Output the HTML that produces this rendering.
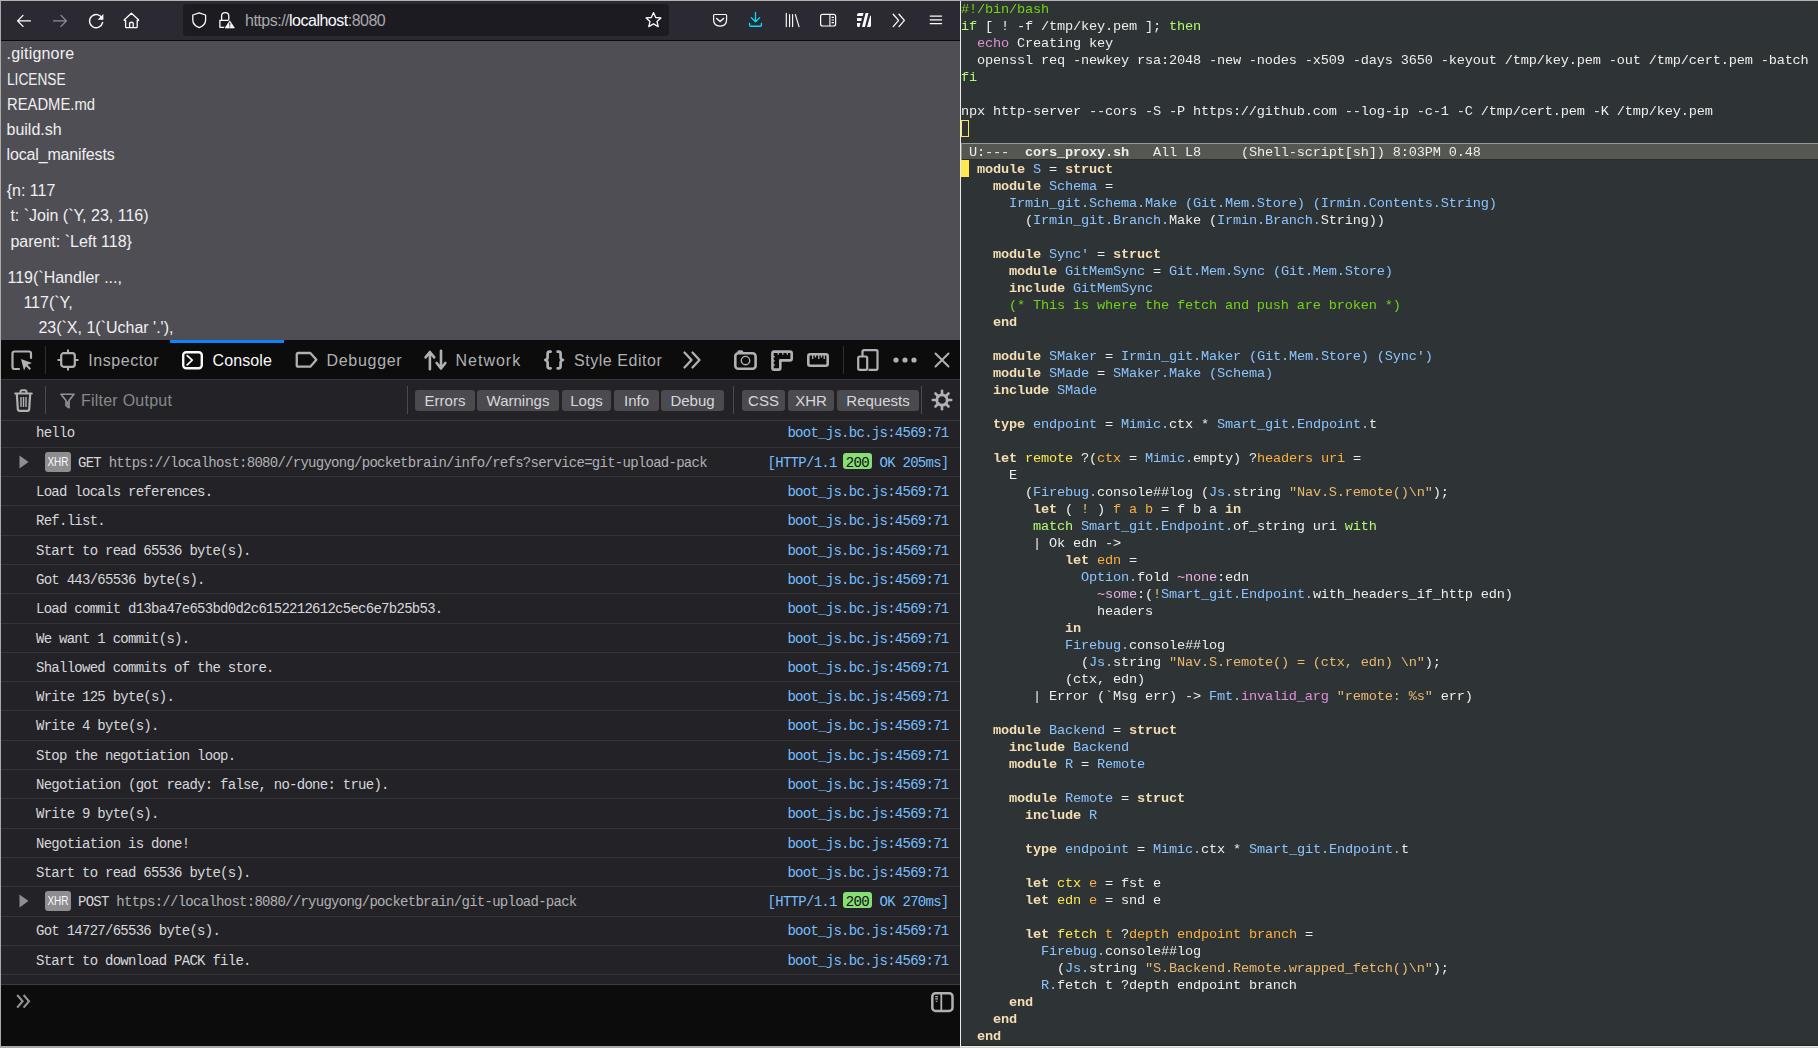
<!DOCTYPE html>
<html><head><meta charset="utf-8"><title>screen</title><style>*{margin:0;padding:0;box-sizing:border-box}
html,body{width:1818px;height:1048px;overflow:hidden;background:#2e3436;position:relative}
.a{position:absolute}
.t{white-space:pre}
svg{overflow:visible}
</style></head><body>
<div class="a" style="left:0px;top:0px;width:1818px;height:1px;background:#b5b3ae;"></div>
<div class="a" style="left:0px;top:0px;width:1px;height:1048px;background:#a9aaa5;"></div>
<div class="a" style="left:1px;top:1px;width:959px;height:39px;background:#2b2a33;"></div>
<div class="a" style="left:1px;top:40px;width:959px;height:1px;background:#0b0b0e;"></div>
<div class="a" style="left:183px;top:4.4px;width:486px;height:31.3px;background:#1c1b22;border-radius:4px"></div>
<svg class="a" style="left:0px;top:0px;" width="960" height="41" viewBox="0 0 960 41"><path d="M17.6 20.9 H30.4 M23 15.4 L17.6 20.9 L23 26.4" fill="none" stroke="#fbfbfe" stroke-width="1.35" stroke-linecap="round" stroke-linejoin="round"/><path d="M66.4 20.9 H53.6 M61 15.4 L66.4 20.9 L61 26.4" fill="none" stroke="#8f8e95" stroke-width="1.35" stroke-linecap="round" stroke-linejoin="round"/><path d="M102.2 18.5 A6.6 6.6 0 1 0 102.6 22.5" fill="none" stroke="#fbfbfe" stroke-width="1.4" stroke-linecap="round"/><path d="M103.4 14 V19.8 H97.6 Z" fill="#fbfbfe"/><path d="M131.4 13.3 L124.3 19.8 Q124 20.3 124.6 20.5 H125.6 V27 Q125.6 27.6 126.2 27.6 H136.6 Q137.2 27.6 137.2 27 V20.5 H138.2 Q138.8 20.3 138.5 19.8 Z" fill="none" stroke="#fbfbfe" stroke-width="1.3" stroke-linejoin="round"/><path d="M129.6 27.6 V23 Q131.4 21.4 133.2 23 V27.6" fill="none" stroke="#fbfbfe" stroke-width="1.3"/><path d="M199.2 12.8 L205.6 15 V20 Q205.6 25.2 199.2 27.6 Q192.8 25.2 192.8 20 V15 Z" fill="none" stroke="#fbfbfe" stroke-width="1.3" stroke-linejoin="round"/><path d="M221.6 20 V16.2 Q221.6 12.7 225.2 12.7 Q228.8 12.7 228.8 16.2 V20" fill="none" stroke="#fbfbfe" stroke-width="1.3"/><path d="M225.5 27.3 H219.9 V20.4 H229.6" fill="none" stroke="#fbfbfe" stroke-width="1.3" stroke-linejoin="round"/><path d="M229.8 20.2 L235 28.3 H224.6 Z" fill="#1c1b22" stroke="#1c1b22" stroke-width="1.6" stroke-linejoin="round"/><path d="M229.8 20.8 L234.5 28 H225.1 Z" fill="#fbfbfe" stroke="#fbfbfe" stroke-width="0.6" stroke-linejoin="round"/><rect x="229.3" y="22.6" width="1" height="3" fill="#1c1b22"/><rect x="229.3" y="26.3" width="1" height="1" fill="#1c1b22"/><path d="M653.5 12.6 L655.7 17.5 L660.9 17.9 L657 21.4 L658.2 26.6 L653.5 23.9 L648.8 26.6 L650 21.4 L646.1 17.9 L651.3 17.5 Z" fill="none" stroke="#fbfbfe" stroke-width="1.3" stroke-linejoin="round"/><path d="M714.6 14.5 H725.6 Q726.6 14.5 726.6 15.5 V19.6 Q726.6 26.1 720.1 26.1 Q713.6 26.1 713.6 19.6 V15.5 Q713.6 14.5 714.6 14.5 Z" fill="none" stroke="#fbfbfe" stroke-width="1.2"/><path d="M716.6 18.4 L720.1 21.6 L723.6 18.4" fill="none" stroke="#fbfbfe" stroke-width="1.4" stroke-linecap="round" stroke-linejoin="round"/><path d="M755.5 12.4 V21.6 M751.3 17.6 L755.5 21.8 L759.7 17.6" fill="none" stroke="#00ddff" stroke-width="1.3" stroke-linecap="round" stroke-linejoin="round"/><path d="M749.6 23.4 V25 Q749.6 26.2 750.8 26.2 H760.2 Q761.4 26.2 761.4 25 V23.4" fill="none" stroke="#00ddff" stroke-width="1.4" stroke-linecap="round"/><path d="M786.3 13.4 V26.6 M789.6 14.6 V26.6 M792.6 14.6 V26.6 M795.4 14.6 L799 26.6" fill="none" stroke="#fbfbfe" stroke-width="1.15" stroke-linecap="round"/><rect x="820.6" y="14.4" width="15" height="11.6" rx="2" fill="none" stroke="#fbfbfe" stroke-width="1.2"/><path d="M829.9 14.4 V26 M831.6 17.4 H834 M831.6 20 H834 M831.6 22.6 H834" fill="none" stroke="#fbfbfe" stroke-width="1.1"/><path d="M857 14.9 Q857 12.9 859 12.9 H863.5 L862.8 16 H857 Z M857 18 H861.9 L861.2 20.9 H857 Z M857 23.1 H860.5 L859.5 27 H858.5 Q857 27 857 25.5 Z M865.6 12.9 H868.5 L864.9 27 H862 Z M870.2 15.8 H871 V25.5 Q871 27 869.5 27 H867 Z" fill="#fbfbfe"/><path d="M893.2 14.2 L898.6 20.4 L893.2 26.6 M899 14.2 L904.4 20.4 L899 26.6" fill="none" stroke="#fbfbfe" stroke-width="1.3" stroke-linecap="round" stroke-linejoin="round"/><path d="M930.2 16 H941.6 M930.2 19.8 H941.6 M930.2 23.6 H941.6" fill="none" stroke="#fbfbfe" stroke-width="1.25" stroke-linecap="round"/></svg>
<div class="a t" style="left:245px;top:13.46px;font-size:16px;line-height:16px;font-family:'Liberation Sans', sans-serif;color:#a8a7ad;letter-spacing:-0.5px">https://<span style="color:#fbfbfe">localhost</span>:8080</div>
<div class="a" style="left:1px;top:41px;width:959px;height:299px;background:#4f4e55;"></div>
<div class="a t" style="left:6.50px;top:45.66px;font-size:16.000px;line-height:16.000px;font-family:'Liberation Sans', sans-serif;color:#f0f0f0;letter-spacing:0.2000px;">.gitignore</div>
<div class="a t" style="left:6.50px;top:71.66px;font-size:16.000px;line-height:16.000px;font-family:'Liberation Sans', sans-serif;color:#f0f0f0;transform:scaleX(0.855);transform-origin:0 0;letter-spacing:0.0000px;">LICENSE</div>
<div class="a t" style="left:6.50px;top:96.66px;font-size:16.000px;line-height:16.000px;font-family:'Liberation Sans', sans-serif;color:#f0f0f0;transform:scaleX(0.925);transform-origin:0 0;letter-spacing:0.0000px;">README.md</div>
<div class="a t" style="left:6.50px;top:121.66px;font-size:16.000px;line-height:16.000px;font-family:'Liberation Sans', sans-serif;color:#f0f0f0;letter-spacing:0.0000px;">build.sh</div>
<div class="a t" style="left:6.50px;top:147.26px;font-size:16.000px;line-height:16.000px;font-family:'Liberation Sans', sans-serif;color:#f0f0f0;letter-spacing:-0.1500px;">local_manifests</div>
<div class="a t" style="left:6.70px;top:182.96px;font-size:16.000px;line-height:16.000px;font-family:'Liberation Sans', sans-serif;color:#f0f0f0;">{n: 117</div>
<div class="a t" style="left:10.40px;top:208.46px;font-size:16.000px;line-height:16.000px;font-family:'Liberation Sans', sans-serif;color:#f0f0f0;">t: `Join (`Y, 23, 116)</div>
<div class="a t" style="left:10.40px;top:233.86px;font-size:16.000px;line-height:16.000px;font-family:'Liberation Sans', sans-serif;color:#f0f0f0;">parent: `Left 118}</div>
<div class="a t" style="left:7.50px;top:270.26px;font-size:16.000px;line-height:16.000px;font-family:'Liberation Sans', sans-serif;color:#f0f0f0;">119(`Handler ...,</div>
<div class="a t" style="left:23.40px;top:295.26px;font-size:16.000px;line-height:16.000px;font-family:'Liberation Sans', sans-serif;color:#f0f0f0;">117(`Y,</div>
<div class="a t" style="left:38.40px;top:319.76px;font-size:16.000px;line-height:16.000px;font-family:'Liberation Sans', sans-serif;color:#f0f0f0;">23(`X, 1(`Uchar '.'),</div>
<div class="a" style="left:1px;top:340px;width:959px;height:39px;background:#0c0c0d;"></div>
<div class="a" style="left:1px;top:379px;width:959px;height:1px;background:#38383d;"></div>
<div class="a" style="left:170px;top:340px;width:114px;height:3px;background:#0a84ff;"></div>
<svg class="a" style="left:11px;top:350px;" width="23" height="21" viewBox="0 0 23 21"><path d="M8 19 H3.5 Q1.5 19 1.5 17 V3.5 Q1.5 1.5 3.5 1.5 H18 Q20 1.5 20 3.5 V8" fill="none" stroke="#b1b1b3" stroke-width="2.2" stroke-linecap="round"/><path d="M10 9 L21 13 L16.5 14.8 L20 18.5 L18.5 20 L15 16.3 L13 20.5 Z" fill="#b1b1b3"/></svg>
<div class="a" style="left:45px;top:346px;width:1px;height:28px;background:#2f2f33;"></div>
<svg class="a" style="left:57px;top:349px;" width="22" height="22" viewBox="0 0 22 22"><rect x="4.2" y="4.2" width="13.6" height="13.6" rx="2.5" fill="none" stroke="#b1b1b3" stroke-width="2.2"/><path d="M11 0.5 V4.2 M11 17.8 V21.5 M0.5 11 H4.2 M17.8 11 H21.5" stroke="#b1b1b3" stroke-width="2"/></svg>
<div class="a t" style="left:88.30px;top:353.46px;font-size:16.000px;line-height:16.000px;font-family:'Liberation Sans', sans-serif;color:#b1b1b3;letter-spacing:0.5500px;">Inspector</div>
<svg class="a" style="left:181px;top:350px;" width="23" height="20" viewBox="0 0 23 20"><rect x="2.2" y="2.2" width="18.6" height="16" rx="3" fill="none" stroke="#f9f9fa" stroke-width="2.4"/><path d="M6.2 5.6 L11.2 10.2 L6.2 14.8" fill="none" stroke="#f9f9fa" stroke-width="1.8" stroke-linecap="round" stroke-linejoin="round"/></svg>
<div class="a t" style="left:212.50px;top:353.46px;font-size:16.000px;line-height:16.000px;font-family:'Liberation Sans', sans-serif;color:#f9f9fa;letter-spacing:0.1000px;">Console</div>
<svg class="a" style="left:295px;top:350px;" width="23" height="20" viewBox="0 0 23 20"><path d="M3.2 3 H15.3 L21.4 9.85 L15.3 16.7 H3.2 Q1.75 16.7 1.75 15.2 V4.5 Q1.75 3 3.2 3 Z" fill="none" stroke="#b1b1b3" stroke-width="2.3" stroke-linejoin="round"/></svg>
<div class="a t" style="left:326.50px;top:353.46px;font-size:16.000px;line-height:16.000px;font-family:'Liberation Sans', sans-serif;color:#b1b1b3;letter-spacing:0.7000px;">Debugger</div>
<svg class="a" style="left:424px;top:349px;" width="23" height="22" viewBox="0 0 23 22"><path d="M5.9 3.5 V20.2 M17 1.8 V18.5 M1.6 8.4 L5.9 3 L10.2 8.4 M12.7 14 L17 19.5 L21.3 14" fill="none" stroke="#b1b1b3" stroke-width="2.6" stroke-linecap="round" stroke-linejoin="round"/></svg>
<div class="a t" style="left:455.50px;top:353.46px;font-size:16.000px;line-height:16.000px;font-family:'Liberation Sans', sans-serif;color:#b1b1b3;letter-spacing:1.0000px;">Network</div>
<svg class="a" style="left:543px;top:349px;" width="23" height="22" viewBox="0 0 23 22"><path d="M7.6 2.7 H6.6 Q4.6 2.7 4.6 4.7 V8.4 Q4.6 10.3 2.2 10.95 Q4.6 11.6 4.6 13.5 V17.3 Q4.6 19.3 6.6 19.3 H7.6 M14.6 2.7 H15.6 Q17.6 2.7 17.6 4.7 V8.4 Q17.6 10.3 20 10.95 Q17.6 11.6 17.6 13.5 V17.3 Q17.6 19.3 15.6 19.3 H14.6" fill="none" stroke="#b1b1b3" stroke-width="2.7" stroke-linecap="round" stroke-linejoin="round"/></svg>
<div class="a t" style="left:574.00px;top:353.46px;font-size:16.000px;line-height:16.000px;font-family:'Liberation Sans', sans-serif;color:#b1b1b3;letter-spacing:0.5500px;">Style Editor</div>
<svg class="a" style="left:683px;top:351px;" width="19" height="18" viewBox="0 0 19 18"><path d="M1.5 1.5 L8.5 9 L1.5 16.5 M9.5 1.5 L16.5 9 L9.5 16.5" fill="none" stroke="#b1b1b3" stroke-width="2.3" stroke-linecap="round" stroke-linejoin="round"/></svg>
<svg class="a" style="left:734px;top:350px;" width="23" height="21" viewBox="0 0 23 21"><path d="M4 2.6 Q4 1.2 5.4 1.2 H7.2 Q8.6 1.2 8.6 2.6" fill="none" stroke="#b1b1b3" stroke-width="1.8"/><rect x="1.3" y="3.2" width="20.3" height="15.5" rx="3" fill="none" stroke="#b1b1b3" stroke-width="2.6"/><circle cx="11.5" cy="10.6" r="4.2" fill="none" stroke="#b1b1b3" stroke-width="1.4"/></svg>
<svg class="a" style="left:770px;top:350px;" width="23" height="21" viewBox="0 0 23 21"><path d="M4.1 1.6 H20 Q21.7 1.6 21.7 3.3 V8.7 Q21.7 10.4 20 10.4 H10.3 V17.9 Q10.3 19.6 8.6 19.6 H4.1 Q2.4 19.6 2.4 17.9 V3.3 Q2.4 1.6 4.1 1.6 Z" fill="none" stroke="#b1b1b3" stroke-width="2.6" stroke-linejoin="round"/><path d="M8.2 2 V4.8 M12.8 2 V4.8 M17.3 2 V4.8 M2 6.6 H4.8 M2 10.8 H4.8 M2 15 H4.8" stroke="#b1b1b3" stroke-width="1.3"/></svg>
<svg class="a" style="left:807px;top:352px;" width="23" height="16" viewBox="0 0 23 16"><rect x="1.3" y="2.3" width="19.4" height="11.4" rx="2" fill="none" stroke="#b1b1b3" stroke-width="2.6"/><path d="M5.7 3 V7 M8.5 3 V5.6 M11.8 3 V7 M14.5 3 V5.6 M17.2 3 V7" stroke="#b1b1b3" stroke-width="1.3"/></svg>
<div class="a" style="left:843px;top:346px;width:1px;height:28px;background:#2f2f33;"></div>
<svg class="a" style="left:857px;top:349px;" width="22" height="22" viewBox="0 0 22 22"><path d="M5.5 7 V2.5 Q5.5 1.2 7 1.2 H19 Q20.5 1.2 20.5 2.5 V19.5 Q20.5 20.8 19 20.8 H11.5" fill="none" stroke="#b1b1b3" stroke-width="2.2"/><rect x="1.2" y="7.5" width="9" height="13.3" rx="1.5" fill="none" stroke="#b1b1b3" stroke-width="2.2"/></svg>
<svg class="a" style="left:893px;top:357px;" width="24" height="6" viewBox="0 0 24 6"><circle cx="3" cy="3" r="2.6" fill="#b1b1b3"/><circle cx="12" cy="3" r="2.6" fill="#b1b1b3"/><circle cx="21" cy="3" r="2.6" fill="#b1b1b3"/></svg>
<svg class="a" style="left:934px;top:352px;" width="16" height="16" viewBox="0 0 16 16"><path d="M1.5 1.5 L14.5 14.5 M14.5 1.5 L1.5 14.5" stroke="#b1b1b3" stroke-width="2" stroke-linecap="round"/></svg>
<div class="a" style="left:1px;top:380px;width:959px;height:40px;background:#232327;"></div>
<div class="a" style="left:1px;top:420px;width:959px;height:1px;background:#38383d;"></div>
<svg class="a" style="left:14px;top:389px;" width="19" height="23" viewBox="0 0 19 23"><path d="M1.2 4.5 H17.8 M6.5 4.5 V2.8 Q6.5 1.2 8 1.2 H11 Q12.5 1.2 12.5 2.8 V4.5" fill="none" stroke="#b1b1b3" stroke-width="2" stroke-linecap="round"/><path d="M2.8 4.5 L3.8 20 Q3.9 21.8 5.6 21.8 H13.4 Q15.1 21.8 15.2 20 L16.2 4.5" fill="none" stroke="#b1b1b3" stroke-width="2.2"/><path d="M7 8 V18 M9.5 8 V18 M12 8 V18" stroke="#b1b1b3" stroke-width="1.4"/></svg>
<div class="a" style="left:45px;top:386px;width:1px;height:28px;background:#4a4a4f;"></div>
<svg class="a" style="left:60px;top:393px;" width="15" height="16" viewBox="0 0 15 16"><path d="M1 1.2 H14 L9 7.5 V14.8 L6 12.5 V7.5 Z" fill="none" stroke="#939395" stroke-width="1.6" stroke-linejoin="round"/><path d="M6.5 8.5 H8.5 V13 L6.5 11.5 Z" fill="#939395"/></svg>
<div class="a t" style="left:80.90px;top:392.96px;font-size:16.000px;line-height:16.000px;font-family:'Liberation Sans', sans-serif;color:#88888c;letter-spacing:0.2500px;">Filter Output</div>
<div class="a" style="left:407px;top:386px;width:1px;height:28px;background:#4a4a4f;"></div>
<div class="a" style="left:415px;top:390px;width:60px;height:21px;background:#4a4a4f;border-radius:3px"></div>
<div class="a t" style="left:415px;top:392.60px;width:60px;text-align:center;font-size:15px;line-height:15px;font-family:'Liberation Sans', sans-serif;color:#d7d7db">Errors</div>
<div class="a" style="left:477px;top:390px;width:82px;height:21px;background:#4a4a4f;border-radius:3px"></div>
<div class="a t" style="left:477px;top:392.60px;width:82px;text-align:center;font-size:15px;line-height:15px;font-family:'Liberation Sans', sans-serif;color:#d7d7db">Warnings</div>
<div class="a" style="left:562px;top:390px;width:49px;height:21px;background:#4a4a4f;border-radius:3px"></div>
<div class="a t" style="left:562px;top:392.60px;width:49px;text-align:center;font-size:15px;line-height:15px;font-family:'Liberation Sans', sans-serif;color:#d7d7db">Logs</div>
<div class="a" style="left:614px;top:390px;width:45px;height:21px;background:#4a4a4f;border-radius:3px"></div>
<div class="a t" style="left:614px;top:392.60px;width:45px;text-align:center;font-size:15px;line-height:15px;font-family:'Liberation Sans', sans-serif;color:#d7d7db">Info</div>
<div class="a" style="left:661px;top:390px;width:63px;height:21px;background:#4a4a4f;border-radius:3px"></div>
<div class="a t" style="left:661px;top:392.60px;width:63px;text-align:center;font-size:15px;line-height:15px;font-family:'Liberation Sans', sans-serif;color:#d7d7db">Debug</div>
<div class="a" style="left:742px;top:390px;width:43px;height:21px;background:#4a4a4f;border-radius:3px"></div>
<div class="a t" style="left:742px;top:392.60px;width:43px;text-align:center;font-size:15px;line-height:15px;font-family:'Liberation Sans', sans-serif;color:#d7d7db">CSS</div>
<div class="a" style="left:788px;top:390px;width:46px;height:21px;background:#4a4a4f;border-radius:3px"></div>
<div class="a t" style="left:788px;top:392.60px;width:46px;text-align:center;font-size:15px;line-height:15px;font-family:'Liberation Sans', sans-serif;color:#d7d7db">XHR</div>
<div class="a" style="left:837px;top:390px;width:82px;height:21px;background:#4a4a4f;border-radius:3px"></div>
<div class="a t" style="left:837px;top:392.60px;width:82px;text-align:center;font-size:15px;line-height:15px;font-family:'Liberation Sans', sans-serif;color:#d7d7db">Requests</div>
<div class="a" style="left:733px;top:386px;width:1px;height:28px;background:#4a4a4f;"></div>
<div class="a" style="left:921px;top:386px;width:1px;height:28px;background:#4a4a4f;"></div>
<svg class="a" style="left:931px;top:389px;" width="22" height="22" viewBox="0 0 22 22"><line x1="16.00" y1="11.00" x2="20.20" y2="11.00" stroke="#b1b1b3" stroke-width="2.6" stroke-linecap="round"/><line x1="14.54" y1="14.54" x2="17.51" y2="17.51" stroke="#b1b1b3" stroke-width="2.6" stroke-linecap="round"/><line x1="11.00" y1="16.00" x2="11.00" y2="20.20" stroke="#b1b1b3" stroke-width="2.6" stroke-linecap="round"/><line x1="7.46" y1="14.54" x2="4.49" y2="17.51" stroke="#b1b1b3" stroke-width="2.6" stroke-linecap="round"/><line x1="6.00" y1="11.00" x2="1.80" y2="11.00" stroke="#b1b1b3" stroke-width="2.6" stroke-linecap="round"/><line x1="7.46" y1="7.46" x2="4.49" y2="4.49" stroke="#b1b1b3" stroke-width="2.6" stroke-linecap="round"/><line x1="11.00" y1="6.00" x2="11.00" y2="1.80" stroke="#b1b1b3" stroke-width="2.6" stroke-linecap="round"/><line x1="14.54" y1="7.46" x2="17.51" y2="4.49" stroke="#b1b1b3" stroke-width="2.6" stroke-linecap="round"/><circle cx="11" cy="11" r="5.2" fill="none" stroke="#b1b1b3" stroke-width="2.8"/></svg>
<div class="a" style="left:1px;top:421px;width:959px;height:564px;background:#232327;"></div>
<div class="a" style="left:1px;top:447px;width:959px;height:1px;background:#343438;"></div>
<div class="a" style="left:1px;top:476px;width:959px;height:1px;background:#343438;"></div>
<div class="a" style="left:1px;top:505px;width:959px;height:1px;background:#343438;"></div>
<div class="a" style="left:1px;top:535px;width:959px;height:1px;background:#343438;"></div>
<div class="a" style="left:1px;top:564px;width:959px;height:1px;background:#343438;"></div>
<div class="a" style="left:1px;top:593px;width:959px;height:1px;background:#343438;"></div>
<div class="a" style="left:1px;top:623px;width:959px;height:1px;background:#343438;"></div>
<div class="a" style="left:1px;top:652px;width:959px;height:1px;background:#343438;"></div>
<div class="a" style="left:1px;top:681px;width:959px;height:1px;background:#343438;"></div>
<div class="a" style="left:1px;top:710px;width:959px;height:1px;background:#343438;"></div>
<div class="a" style="left:1px;top:740px;width:959px;height:1px;background:#343438;"></div>
<div class="a" style="left:1px;top:769px;width:959px;height:1px;background:#343438;"></div>
<div class="a" style="left:1px;top:798px;width:959px;height:1px;background:#343438;"></div>
<div class="a" style="left:1px;top:828px;width:959px;height:1px;background:#343438;"></div>
<div class="a" style="left:1px;top:857px;width:959px;height:1px;background:#343438;"></div>
<div class="a" style="left:1px;top:886px;width:959px;height:1px;background:#343438;"></div>
<div class="a" style="left:1px;top:916px;width:959px;height:1px;background:#343438;"></div>
<div class="a" style="left:1px;top:945px;width:959px;height:1px;background:#343438;"></div>
<div class="a" style="left:1px;top:974px;width:959px;height:1px;background:#343438;"></div>
<div class="a t" style="left:36.00px;top:426.47px;font-size:14.000px;line-height:14.000px;font-family:'Liberation Mono', monospace;color:#d7d7db;letter-spacing:-0.7321px;">hello</div>
<div class="a t" style="left:787.45px;top:426.47px;font-size:14.000px;line-height:14.000px;font-family:'Liberation Mono', monospace;color:#75bfff;letter-spacing:-0.7321px;">boot_js.bc.js:4569:71</div>
<svg class="a" style="left:19px;top:455px;" width="10" height="14" viewBox="0 0 10 14"><path d="M0.5 0.5 L9.5 7 L0.5 13.5 Z" fill="#8f8f93"/></svg>
<div class="a" style="left:45px;top:452px;width:26px;height:20px;background:#8e8e91;border-radius:3px"></div>
<div class="a t" style="left:44px;top:454.77px;width:26px;text-align:center;font-size:13.5px;line-height:13.5px;font-family:'Liberation Sans', sans-serif;color:#fbfbfb;transform:scaleX(0.74)">XHR</div>
<div class="a t" style="left:78.00px;top:455.77px;font-size:14.000px;line-height:14.000px;font-family:'Liberation Mono', monospace;color:#d7d7db;letter-spacing:-0.7321px;">GET</div>
<div class="a t" style="left:108.68px;top:455.77px;font-size:14.000px;line-height:14.000px;font-family:'Liberation Mono', monospace;color:#b1b1b3;letter-spacing:-0.7321px;">https://localhost:8080//ryugyong/pocketbrain/info/refs?service=git-upload-pack</div>
<div class="a t" style="left:871.81px;top:455.77px;font-size:14.000px;line-height:14.000px;font-family:'Liberation Mono', monospace;color:#75bfff;letter-spacing:-0.7321px;"> OK 205ms]</div>
<div class="a" style="left:843px;top:453px;width:29px;height:16px;background:#86de74;border-radius:3px"></div>
<div class="a t" style="left:845.81px;top:455.77px;font-size:14.000px;line-height:14.000px;font-family:'Liberation Mono', monospace;color:#0c0c0d;letter-spacing:-0.7321px;">200</div>
<div class="a t" style="left:767.62px;top:455.77px;font-size:14.000px;line-height:14.000px;font-family:'Liberation Mono', monospace;color:#75bfff;letter-spacing:-0.7321px;">[HTTP/1.1 </div>
<div class="a t" style="left:36.00px;top:485.06px;font-size:14.000px;line-height:14.000px;font-family:'Liberation Mono', monospace;color:#d7d7db;letter-spacing:-0.7321px;">Load locals references.</div>
<div class="a t" style="left:787.45px;top:485.06px;font-size:14.000px;line-height:14.000px;font-family:'Liberation Mono', monospace;color:#75bfff;letter-spacing:-0.7321px;">boot_js.bc.js:4569:71</div>
<div class="a t" style="left:36.00px;top:514.36px;font-size:14.000px;line-height:14.000px;font-family:'Liberation Mono', monospace;color:#d7d7db;letter-spacing:-0.7321px;">Ref.list.</div>
<div class="a t" style="left:787.45px;top:514.36px;font-size:14.000px;line-height:14.000px;font-family:'Liberation Mono', monospace;color:#75bfff;letter-spacing:-0.7321px;">boot_js.bc.js:4569:71</div>
<div class="a t" style="left:36.00px;top:543.65px;font-size:14.000px;line-height:14.000px;font-family:'Liberation Mono', monospace;color:#d7d7db;letter-spacing:-0.7321px;">Start to read 65536 byte(s).</div>
<div class="a t" style="left:787.45px;top:543.65px;font-size:14.000px;line-height:14.000px;font-family:'Liberation Mono', monospace;color:#75bfff;letter-spacing:-0.7321px;">boot_js.bc.js:4569:71</div>
<div class="a t" style="left:36.00px;top:572.94px;font-size:14.000px;line-height:14.000px;font-family:'Liberation Mono', monospace;color:#d7d7db;letter-spacing:-0.7321px;">Got 443/65536 byte(s).</div>
<div class="a t" style="left:787.45px;top:572.94px;font-size:14.000px;line-height:14.000px;font-family:'Liberation Mono', monospace;color:#75bfff;letter-spacing:-0.7321px;">boot_js.bc.js:4569:71</div>
<div class="a t" style="left:36.00px;top:602.24px;font-size:14.000px;line-height:14.000px;font-family:'Liberation Mono', monospace;color:#d7d7db;letter-spacing:-0.7321px;">Load commit d13ba47e653bd0d2c6152212612c5ec6e7b25b53.</div>
<div class="a t" style="left:787.45px;top:602.24px;font-size:14.000px;line-height:14.000px;font-family:'Liberation Mono', monospace;color:#75bfff;letter-spacing:-0.7321px;">boot_js.bc.js:4569:71</div>
<div class="a t" style="left:36.00px;top:631.53px;font-size:14.000px;line-height:14.000px;font-family:'Liberation Mono', monospace;color:#d7d7db;letter-spacing:-0.7321px;">We want 1 commit(s).</div>
<div class="a t" style="left:787.45px;top:631.53px;font-size:14.000px;line-height:14.000px;font-family:'Liberation Mono', monospace;color:#75bfff;letter-spacing:-0.7321px;">boot_js.bc.js:4569:71</div>
<div class="a t" style="left:36.00px;top:660.83px;font-size:14.000px;line-height:14.000px;font-family:'Liberation Mono', monospace;color:#d7d7db;letter-spacing:-0.7321px;">Shallowed commits of the store.</div>
<div class="a t" style="left:787.45px;top:660.83px;font-size:14.000px;line-height:14.000px;font-family:'Liberation Mono', monospace;color:#75bfff;letter-spacing:-0.7321px;">boot_js.bc.js:4569:71</div>
<div class="a t" style="left:36.00px;top:690.12px;font-size:14.000px;line-height:14.000px;font-family:'Liberation Mono', monospace;color:#d7d7db;letter-spacing:-0.7321px;">Write 125 byte(s).</div>
<div class="a t" style="left:787.45px;top:690.12px;font-size:14.000px;line-height:14.000px;font-family:'Liberation Mono', monospace;color:#75bfff;letter-spacing:-0.7321px;">boot_js.bc.js:4569:71</div>
<div class="a t" style="left:36.00px;top:719.41px;font-size:14.000px;line-height:14.000px;font-family:'Liberation Mono', monospace;color:#d7d7db;letter-spacing:-0.7321px;">Write 4 byte(s).</div>
<div class="a t" style="left:787.45px;top:719.41px;font-size:14.000px;line-height:14.000px;font-family:'Liberation Mono', monospace;color:#75bfff;letter-spacing:-0.7321px;">boot_js.bc.js:4569:71</div>
<div class="a t" style="left:36.00px;top:748.71px;font-size:14.000px;line-height:14.000px;font-family:'Liberation Mono', monospace;color:#d7d7db;letter-spacing:-0.7321px;">Stop the negotiation loop.</div>
<div class="a t" style="left:787.45px;top:748.71px;font-size:14.000px;line-height:14.000px;font-family:'Liberation Mono', monospace;color:#75bfff;letter-spacing:-0.7321px;">boot_js.bc.js:4569:71</div>
<div class="a t" style="left:36.00px;top:778.00px;font-size:14.000px;line-height:14.000px;font-family:'Liberation Mono', monospace;color:#d7d7db;letter-spacing:-0.7321px;">Negotiation (got ready: false, no-done: true).</div>
<div class="a t" style="left:787.45px;top:778.00px;font-size:14.000px;line-height:14.000px;font-family:'Liberation Mono', monospace;color:#75bfff;letter-spacing:-0.7321px;">boot_js.bc.js:4569:71</div>
<div class="a t" style="left:36.00px;top:807.30px;font-size:14.000px;line-height:14.000px;font-family:'Liberation Mono', monospace;color:#d7d7db;letter-spacing:-0.7321px;">Write 9 byte(s).</div>
<div class="a t" style="left:787.45px;top:807.30px;font-size:14.000px;line-height:14.000px;font-family:'Liberation Mono', monospace;color:#75bfff;letter-spacing:-0.7321px;">boot_js.bc.js:4569:71</div>
<div class="a t" style="left:36.00px;top:836.59px;font-size:14.000px;line-height:14.000px;font-family:'Liberation Mono', monospace;color:#d7d7db;letter-spacing:-0.7321px;">Negotiation is done!</div>
<div class="a t" style="left:787.45px;top:836.59px;font-size:14.000px;line-height:14.000px;font-family:'Liberation Mono', monospace;color:#75bfff;letter-spacing:-0.7321px;">boot_js.bc.js:4569:71</div>
<div class="a t" style="left:36.00px;top:865.88px;font-size:14.000px;line-height:14.000px;font-family:'Liberation Mono', monospace;color:#d7d7db;letter-spacing:-0.7321px;">Start to read 65536 byte(s).</div>
<div class="a t" style="left:787.45px;top:865.88px;font-size:14.000px;line-height:14.000px;font-family:'Liberation Mono', monospace;color:#75bfff;letter-spacing:-0.7321px;">boot_js.bc.js:4569:71</div>
<svg class="a" style="left:19px;top:894px;" width="10" height="14" viewBox="0 0 10 14"><path d="M0.5 0.5 L9.5 7 L0.5 13.5 Z" fill="#8f8f93"/></svg>
<div class="a" style="left:45px;top:891px;width:26px;height:20px;background:#8e8e91;border-radius:3px"></div>
<div class="a t" style="left:44px;top:894.18px;width:26px;text-align:center;font-size:13.5px;line-height:13.5px;font-family:'Liberation Sans', sans-serif;color:#fbfbfb;transform:scaleX(0.74)">XHR</div>
<div class="a t" style="left:78.00px;top:895.18px;font-size:14.000px;line-height:14.000px;font-family:'Liberation Mono', monospace;color:#d7d7db;letter-spacing:-0.7321px;">POST</div>
<div class="a t" style="left:116.35px;top:895.18px;font-size:14.000px;line-height:14.000px;font-family:'Liberation Mono', monospace;color:#b1b1b3;letter-spacing:-0.7321px;">https://localhost:8080//ryugyong/pocketbrain/git-upload-pack</div>
<div class="a t" style="left:871.81px;top:895.18px;font-size:14.000px;line-height:14.000px;font-family:'Liberation Mono', monospace;color:#75bfff;letter-spacing:-0.7321px;"> OK 270ms]</div>
<div class="a" style="left:843px;top:892px;width:29px;height:16px;background:#86de74;border-radius:3px"></div>
<div class="a t" style="left:845.81px;top:895.18px;font-size:14.000px;line-height:14.000px;font-family:'Liberation Mono', monospace;color:#0c0c0d;letter-spacing:-0.7321px;">200</div>
<div class="a t" style="left:767.62px;top:895.18px;font-size:14.000px;line-height:14.000px;font-family:'Liberation Mono', monospace;color:#75bfff;letter-spacing:-0.7321px;">[HTTP/1.1 </div>
<div class="a t" style="left:36.00px;top:924.47px;font-size:14.000px;line-height:14.000px;font-family:'Liberation Mono', monospace;color:#d7d7db;letter-spacing:-0.7321px;">Got 14727/65536 byte(s).</div>
<div class="a t" style="left:787.45px;top:924.47px;font-size:14.000px;line-height:14.000px;font-family:'Liberation Mono', monospace;color:#75bfff;letter-spacing:-0.7321px;">boot_js.bc.js:4569:71</div>
<div class="a t" style="left:36.00px;top:953.77px;font-size:14.000px;line-height:14.000px;font-family:'Liberation Mono', monospace;color:#d7d7db;letter-spacing:-0.7321px;">Start to download PACK file.</div>
<div class="a t" style="left:787.45px;top:953.77px;font-size:14.000px;line-height:14.000px;font-family:'Liberation Mono', monospace;color:#75bfff;letter-spacing:-0.7321px;">boot_js.bc.js:4569:71</div>
<div class="a" style="left:1px;top:984px;width:959px;height:62px;background:#0c0c0d;"></div>
<div class="a" style="left:1px;top:984px;width:959px;height:1px;background:#3a3a3e;"></div>
<svg class="a" style="left:15px;top:993px;" width="18" height="17" viewBox="0 0 18 17"><path d="M2.2 2 L7.6 8.3 L2.2 14.6 M8.6 2 L14 8.3 L8.6 14.6" fill="none" stroke="#939395" stroke-width="2.1" stroke-linecap="butt" stroke-linejoin="miter"/></svg>
<svg class="a" style="left:931px;top:992px;" width="23" height="21" viewBox="0 0 23 21"><rect x="1.3" y="1.3" width="20.2" height="17.6" rx="3.2" fill="none" stroke="#b1b1b3" stroke-width="2.5"/><path d="M10.3 1.5 V18.8" stroke="#b1b1b3" stroke-width="1.8"/><path d="M4.2 4.6 H7 M4.2 6.8 H7" stroke="#b1b1b3" stroke-width="1.3"/><path d="M4.3 8.8 H6.9 L5.6 10.2 Z" fill="#b1b1b3"/></svg>
<div class="a" style="left:0px;top:1046px;width:960px;height:2px;background:#a9aaa5;"></div>
<div class="a" style="left:960px;top:1px;width:1px;height:1045px;background:#ebebe7;"></div>
<div class="a" style="left:961px;top:1px;width:857px;height:1045px;background:#2e3436;"></div>
<div class="a" style="left:0;top:0;width:1818px;height:1048px;will-change:transform">
<div class="a t" style="left:961.00px;top:2.98px;font-size:13.600px;line-height:13.600px;font-family:'Liberation Mono', monospace;color:#eeeeec;letter-spacing:-0.1612px;"><span style="color:#73d216">#!/bin/bash</span></div>
<div class="a t" style="left:961.00px;top:19.98px;font-size:13.600px;line-height:13.600px;font-family:'Liberation Mono', monospace;color:#eeeeec;letter-spacing:-0.1612px;"><span style="color:#b4fa70">if</span> [ ! -f /tmp/key.pem ]; <span style="color:#b4fa70">then</span></div>
<div class="a t" style="left:961.00px;top:36.98px;font-size:13.600px;line-height:13.600px;font-family:'Liberation Mono', monospace;color:#eeeeec;letter-spacing:-0.1612px;">  <span style="color:#e090d7">echo</span> Creating key</div>
<div class="a t" style="left:961.00px;top:53.98px;font-size:13.600px;line-height:13.600px;font-family:'Liberation Mono', monospace;color:#eeeeec;letter-spacing:-0.1612px;">  openssl req -newkey rsa:2048 -new -nodes -x509 -days 3650 -keyout /tmp/key.pem -out /tmp/cert.pem -batch</div>
<div class="a t" style="left:961.00px;top:70.98px;font-size:13.600px;line-height:13.600px;font-family:'Liberation Mono', monospace;color:#eeeeec;letter-spacing:-0.1612px;"><span style="color:#b4fa70">fi</span></div>
<div class="a t" style="left:961.00px;top:104.98px;font-size:13.600px;line-height:13.600px;font-family:'Liberation Mono', monospace;color:#eeeeec;letter-spacing:-0.1612px;">npx http-server --cors -S -P https://github.com --log-ip -c-1 -C /tmp/cert.pem -K /tmp/key.pem</div>
<div class="a" style="left:961px;top:120px;width:8px;height:17px;background:transparent;border:1px solid #fce94f"></div>
<div class="a" style="left:961px;top:143px;width:857px;height:1px;background:#989a94;"></div>
<div class="a" style="left:961px;top:144px;width:857px;height:15px;background:#555753;"></div>
<div class="a" style="left:961px;top:159px;width:857px;height:1px;background:#2a2c29;"></div>
<div class="a" style="left:961px;top:143px;width:1px;height:17px;background:#8a8c86;"></div>
<div class="a t" style="left:961.00px;top:145.58px;font-size:13.600px;line-height:13.600px;font-family:'Liberation Mono', monospace;color:#eeeeec;letter-spacing:-0.1612px;"> U:---  <span style="font-weight:bold">cors_proxy.sh</span>   All L8     (Shell-script[sh]) 8:03PM 0.48</div>
<div class="a" style="left:961px;top:160px;width:8px;height:17px;background:#fce94f;"></div>
<div class="a t" style="left:961.00px;top:162.78px;font-size:13.600px;line-height:13.600px;font-family:'Liberation Mono', monospace;color:#eeeeec;letter-spacing:-0.1612px;">  <span style="color:#f5deb3;font-weight:bold">module</span> <span style="color:#8cc4ff">S</span> = <span style="color:#f5deb3;font-weight:bold">struct</span></div>
<div class="a t" style="left:961.00px;top:179.78px;font-size:13.600px;line-height:13.600px;font-family:'Liberation Mono', monospace;color:#eeeeec;letter-spacing:-0.1612px;">    <span style="color:#f5deb3;font-weight:bold">module</span> <span style="color:#8cc4ff">Schema</span> =</div>
<div class="a t" style="left:961.00px;top:196.78px;font-size:13.600px;line-height:13.600px;font-family:'Liberation Mono', monospace;color:#eeeeec;letter-spacing:-0.1612px;">      <span style="color:#8cc4ff">Irmin_git.Schema.Make (Git.Mem.Store) (Irmin.Contents.String)</span></div>
<div class="a t" style="left:961.00px;top:213.78px;font-size:13.600px;line-height:13.600px;font-family:'Liberation Mono', monospace;color:#eeeeec;letter-spacing:-0.1612px;">        (<span style="color:#8cc4ff">Irmin_git.Branch.</span>Make (<span style="color:#8cc4ff">Irmin.Branch.</span>String))</div>
<div class="a t" style="left:961.00px;top:247.78px;font-size:13.600px;line-height:13.600px;font-family:'Liberation Mono', monospace;color:#eeeeec;letter-spacing:-0.1612px;">    <span style="color:#f5deb3;font-weight:bold">module</span> <span style="color:#8cc4ff">Sync'</span> = <span style="color:#f5deb3;font-weight:bold">struct</span></div>
<div class="a t" style="left:961.00px;top:264.78px;font-size:13.600px;line-height:13.600px;font-family:'Liberation Mono', monospace;color:#eeeeec;letter-spacing:-0.1612px;">      <span style="color:#f5deb3;font-weight:bold">module</span> <span style="color:#8cc4ff">GitMemSync</span> = <span style="color:#8cc4ff">Git.Mem.Sync (Git.Mem.Store)</span></div>
<div class="a t" style="left:961.00px;top:281.78px;font-size:13.600px;line-height:13.600px;font-family:'Liberation Mono', monospace;color:#eeeeec;letter-spacing:-0.1612px;">      <span style="color:#f5deb3;font-weight:bold">include</span> <span style="color:#8cc4ff">GitMemSync</span></div>
<div class="a t" style="left:961.00px;top:298.78px;font-size:13.600px;line-height:13.600px;font-family:'Liberation Mono', monospace;color:#eeeeec;letter-spacing:-0.1612px;">      <span style="color:#73d216">(* This is where the fetch and push are broken *)</span></div>
<div class="a t" style="left:961.00px;top:315.78px;font-size:13.600px;line-height:13.600px;font-family:'Liberation Mono', monospace;color:#eeeeec;letter-spacing:-0.1612px;">    <span style="color:#f5deb3;font-weight:bold">end</span></div>
<div class="a t" style="left:961.00px;top:349.78px;font-size:13.600px;line-height:13.600px;font-family:'Liberation Mono', monospace;color:#eeeeec;letter-spacing:-0.1612px;">    <span style="color:#f5deb3;font-weight:bold">module</span> <span style="color:#8cc4ff">SMaker</span> = <span style="color:#8cc4ff">Irmin_git.Maker (Git.Mem.Store) (Sync')</span></div>
<div class="a t" style="left:961.00px;top:366.78px;font-size:13.600px;line-height:13.600px;font-family:'Liberation Mono', monospace;color:#eeeeec;letter-spacing:-0.1612px;">    <span style="color:#f5deb3;font-weight:bold">module</span> <span style="color:#8cc4ff">SMade</span> = <span style="color:#8cc4ff">SMaker.Make (Schema)</span></div>
<div class="a t" style="left:961.00px;top:383.78px;font-size:13.600px;line-height:13.600px;font-family:'Liberation Mono', monospace;color:#eeeeec;letter-spacing:-0.1612px;">    <span style="color:#f5deb3;font-weight:bold">include</span> <span style="color:#8cc4ff">SMade</span></div>
<div class="a t" style="left:961.00px;top:417.78px;font-size:13.600px;line-height:13.600px;font-family:'Liberation Mono', monospace;color:#eeeeec;letter-spacing:-0.1612px;">    <span style="color:#f5deb3;font-weight:bold">type</span> <span style="color:#8cc4ff">endpoint</span> = <span style="color:#8cc4ff">Mimic.</span>ctx * <span style="color:#8cc4ff">Smart_git.Endpoint.</span>t</div>
<div class="a t" style="left:961.00px;top:451.78px;font-size:13.600px;line-height:13.600px;font-family:'Liberation Mono', monospace;color:#eeeeec;letter-spacing:-0.1612px;">    <span style="color:#f5deb3;font-weight:bold">let</span> <span style="color:#fce94f">remote</span> ?(<span style="color:#fcaf3e">ctx</span> = <span style="color:#8cc4ff">Mimic.</span>empty) ?<span style="color:#fcaf3e">headers</span> <span style="color:#fcaf3e">uri</span> =</div>
<div class="a t" style="left:961.00px;top:468.78px;font-size:13.600px;line-height:13.600px;font-family:'Liberation Mono', monospace;color:#eeeeec;letter-spacing:-0.1612px;">      E</div>
<div class="a t" style="left:961.00px;top:485.78px;font-size:13.600px;line-height:13.600px;font-family:'Liberation Mono', monospace;color:#eeeeec;letter-spacing:-0.1612px;">        (<span style="color:#8cc4ff">Firebug.</span>console##log (<span style="color:#8cc4ff">Js.</span>string <span style="color:#e9b96e">"Nav.S.remote()\n"</span>);</div>
<div class="a t" style="left:961.00px;top:502.78px;font-size:13.600px;line-height:13.600px;font-family:'Liberation Mono', monospace;color:#eeeeec;letter-spacing:-0.1612px;">         <span style="color:#f5deb3;font-weight:bold">let</span> ( <span style="color:#d8c86a">!</span> ) <span style="color:#fcaf3e">f</span> <span style="color:#fcaf3e">a</span> <span style="color:#fcaf3e">b</span> = f b a <span style="color:#f5deb3;font-weight:bold">in</span></div>
<div class="a t" style="left:961.00px;top:519.78px;font-size:13.600px;line-height:13.600px;font-family:'Liberation Mono', monospace;color:#eeeeec;letter-spacing:-0.1612px;">         <span style="color:#b4fa70">match</span> <span style="color:#8cc4ff">Smart_git.Endpoint.</span>of_string uri <span style="color:#b4fa70">with</span></div>
<div class="a t" style="left:961.00px;top:536.78px;font-size:13.600px;line-height:13.600px;font-family:'Liberation Mono', monospace;color:#eeeeec;letter-spacing:-0.1612px;">         | Ok edn -&gt;</div>
<div class="a t" style="left:961.00px;top:553.78px;font-size:13.600px;line-height:13.600px;font-family:'Liberation Mono', monospace;color:#eeeeec;letter-spacing:-0.1612px;">             <span style="color:#f5deb3;font-weight:bold">let</span> <span style="color:#fcaf3e">edn</span> =</div>
<div class="a t" style="left:961.00px;top:570.78px;font-size:13.600px;line-height:13.600px;font-family:'Liberation Mono', monospace;color:#eeeeec;letter-spacing:-0.1612px;">               <span style="color:#8cc4ff">Option.</span>fold <span style="color:#e9b2e3">~none</span>:edn</div>
<div class="a t" style="left:961.00px;top:587.78px;font-size:13.600px;line-height:13.600px;font-family:'Liberation Mono', monospace;color:#eeeeec;letter-spacing:-0.1612px;">                 <span style="color:#e9b2e3">~some</span>:(<span style="color:#d8c86a">!</span><span style="color:#8cc4ff">Smart_git.Endpoint.</span>with_headers_if_http edn)</div>
<div class="a t" style="left:961.00px;top:604.78px;font-size:13.600px;line-height:13.600px;font-family:'Liberation Mono', monospace;color:#eeeeec;letter-spacing:-0.1612px;">                 headers</div>
<div class="a t" style="left:961.00px;top:621.78px;font-size:13.600px;line-height:13.600px;font-family:'Liberation Mono', monospace;color:#eeeeec;letter-spacing:-0.1612px;">             <span style="color:#f5deb3;font-weight:bold">in</span></div>
<div class="a t" style="left:961.00px;top:638.78px;font-size:13.600px;line-height:13.600px;font-family:'Liberation Mono', monospace;color:#eeeeec;letter-spacing:-0.1612px;">             <span style="color:#8cc4ff">Firebug.</span>console##log</div>
<div class="a t" style="left:961.00px;top:655.78px;font-size:13.600px;line-height:13.600px;font-family:'Liberation Mono', monospace;color:#eeeeec;letter-spacing:-0.1612px;">               (<span style="color:#8cc4ff">Js.</span>string <span style="color:#e9b96e">"Nav.S.remote() = (ctx, edn) \n"</span>);</div>
<div class="a t" style="left:961.00px;top:672.78px;font-size:13.600px;line-height:13.600px;font-family:'Liberation Mono', monospace;color:#eeeeec;letter-spacing:-0.1612px;">             (ctx, edn)</div>
<div class="a t" style="left:961.00px;top:689.78px;font-size:13.600px;line-height:13.600px;font-family:'Liberation Mono', monospace;color:#eeeeec;letter-spacing:-0.1612px;">         | Error (`Msg err) -&gt; <span style="color:#8cc4ff">Fmt.</span><span style="color:#e090d7">invalid_arg</span> <span style="color:#e9b96e">"remote: %s"</span> err)</div>
<div class="a t" style="left:961.00px;top:723.78px;font-size:13.600px;line-height:13.600px;font-family:'Liberation Mono', monospace;color:#eeeeec;letter-spacing:-0.1612px;">    <span style="color:#f5deb3;font-weight:bold">module</span> <span style="color:#8cc4ff">Backend</span> = <span style="color:#f5deb3;font-weight:bold">struct</span></div>
<div class="a t" style="left:961.00px;top:740.78px;font-size:13.600px;line-height:13.600px;font-family:'Liberation Mono', monospace;color:#eeeeec;letter-spacing:-0.1612px;">      <span style="color:#f5deb3;font-weight:bold">include</span> <span style="color:#8cc4ff">Backend</span></div>
<div class="a t" style="left:961.00px;top:757.78px;font-size:13.600px;line-height:13.600px;font-family:'Liberation Mono', monospace;color:#eeeeec;letter-spacing:-0.1612px;">      <span style="color:#f5deb3;font-weight:bold">module</span> <span style="color:#8cc4ff">R</span> = <span style="color:#8cc4ff">Remote</span></div>
<div class="a t" style="left:961.00px;top:791.78px;font-size:13.600px;line-height:13.600px;font-family:'Liberation Mono', monospace;color:#eeeeec;letter-spacing:-0.1612px;">      <span style="color:#f5deb3;font-weight:bold">module</span> <span style="color:#8cc4ff">Remote</span> = <span style="color:#f5deb3;font-weight:bold">struct</span></div>
<div class="a t" style="left:961.00px;top:808.78px;font-size:13.600px;line-height:13.600px;font-family:'Liberation Mono', monospace;color:#eeeeec;letter-spacing:-0.1612px;">        <span style="color:#f5deb3;font-weight:bold">include</span> <span style="color:#8cc4ff">R</span></div>
<div class="a t" style="left:961.00px;top:842.78px;font-size:13.600px;line-height:13.600px;font-family:'Liberation Mono', monospace;color:#eeeeec;letter-spacing:-0.1612px;">        <span style="color:#f5deb3;font-weight:bold">type</span> <span style="color:#8cc4ff">endpoint</span> = <span style="color:#8cc4ff">Mimic.</span>ctx * <span style="color:#8cc4ff">Smart_git.Endpoint.</span>t</div>
<div class="a t" style="left:961.00px;top:876.78px;font-size:13.600px;line-height:13.600px;font-family:'Liberation Mono', monospace;color:#eeeeec;letter-spacing:-0.1612px;">        <span style="color:#f5deb3;font-weight:bold">let</span> <span style="color:#fce94f">ctx</span> <span style="color:#fcaf3e">e</span> = fst e</div>
<div class="a t" style="left:961.00px;top:893.78px;font-size:13.600px;line-height:13.600px;font-family:'Liberation Mono', monospace;color:#eeeeec;letter-spacing:-0.1612px;">        <span style="color:#f5deb3;font-weight:bold">let</span> <span style="color:#fce94f">edn</span> <span style="color:#fcaf3e">e</span> = snd e</div>
<div class="a t" style="left:961.00px;top:927.78px;font-size:13.600px;line-height:13.600px;font-family:'Liberation Mono', monospace;color:#eeeeec;letter-spacing:-0.1612px;">        <span style="color:#f5deb3;font-weight:bold">let</span> <span style="color:#fce94f">fetch</span> <span style="color:#fcaf3e">t</span> ?<span style="color:#fcaf3e">depth</span> <span style="color:#fcaf3e">endpoint</span> <span style="color:#fcaf3e">branch</span> =</div>
<div class="a t" style="left:961.00px;top:944.78px;font-size:13.600px;line-height:13.600px;font-family:'Liberation Mono', monospace;color:#eeeeec;letter-spacing:-0.1612px;">          <span style="color:#8cc4ff">Firebug.</span>console##log</div>
<div class="a t" style="left:961.00px;top:961.78px;font-size:13.600px;line-height:13.600px;font-family:'Liberation Mono', monospace;color:#eeeeec;letter-spacing:-0.1612px;">            (<span style="color:#8cc4ff">Js.</span>string <span style="color:#e9b96e">"S.Backend.Remote.wrapped_fetch()\n"</span>);</div>
<div class="a t" style="left:961.00px;top:978.78px;font-size:13.600px;line-height:13.600px;font-family:'Liberation Mono', monospace;color:#eeeeec;letter-spacing:-0.1612px;">          <span style="color:#8cc4ff">R.</span>fetch t ?depth endpoint branch</div>
<div class="a t" style="left:961.00px;top:995.78px;font-size:13.600px;line-height:13.600px;font-family:'Liberation Mono', monospace;color:#eeeeec;letter-spacing:-0.1612px;">      <span style="color:#f5deb3;font-weight:bold">end</span></div>
<div class="a t" style="left:961.00px;top:1012.78px;font-size:13.600px;line-height:13.600px;font-family:'Liberation Mono', monospace;color:#eeeeec;letter-spacing:-0.1612px;">    <span style="color:#f5deb3;font-weight:bold">end</span></div>
<div class="a t" style="left:961.00px;top:1029.78px;font-size:13.600px;line-height:13.600px;font-family:'Liberation Mono', monospace;color:#eeeeec;letter-spacing:-0.1612px;">  <span style="color:#f5deb3;font-weight:bold">end</span></div>
</div>
<div class="a" style="left:961px;top:1045px;width:857px;height:1px;background:#222728;"></div>
<div class="a" style="left:960px;top:1046px;width:858px;height:1px;background:#ebebe7;"></div>
<div class="a" style="left:960px;top:1047px;width:858px;height:1px;background:#d0d0cc;"></div>
</body></html>
